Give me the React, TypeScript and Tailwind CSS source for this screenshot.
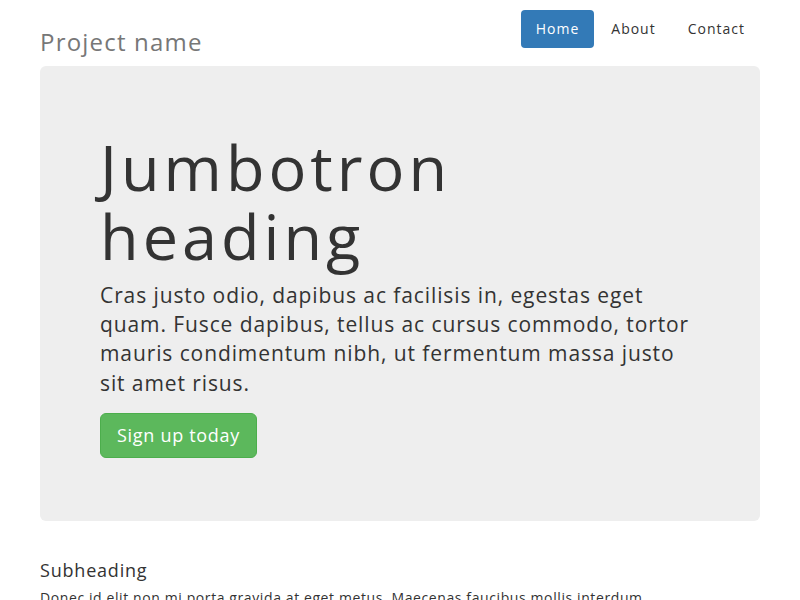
import React from "react";

export default function App() {
  return (
    <div
      className="min-h-[600px] bg-white text-[#333] text-[14px] leading-[1.42857] tracking-[0.6px]"
      style={{ fontFamily: '"Open Sans", "Noto Sans", sans-serif' }}
    >
      <div className="mx-[40px] w-[720px]">
        <header className="flex h-[66px] items-start justify-between">
          <h3 className="mt-[22px] text-[24px] leading-[40px] tracking-[1.2px] text-[#777]">Project name</h3>
          <nav className="mt-[10px] flex gap-[2px] tracking-[1px]">
            <a className="flex h-[38px] items-center rounded-[4px] bg-[#337ab7] px-[15px] text-white">Home</a>
            <a className="flex h-[38px] items-center rounded-[4px] px-[15px] text-[#333]">About</a>
            <a className="flex h-[38px] items-center rounded-[4px] px-[15px] text-[#333]">Contact</a>
          </nav>
        </header>
        <section className="rounded-[6px] bg-[#eee] px-[60px] pt-[48px] pb-[48px]">
          <h1 className="mt-[18px] mb-[10px] w-[480px] text-[63px] leading-[1.1] tracking-[4px]">Jumbotron heading</h1>
          <p className="mb-[15px] w-[600px] text-[21px] leading-[1.4] tracking-[0.9px]">
            Cras justo odio, dapibus ac facilisis in, egestas eget quam. Fusce dapibus, tellus ac cursus commodo, tortor mauris condimentum nibh, ut fermentum massa justo sit amet risus.
          </p>
          <p className="mb-[15px]">
            <a className="inline-flex h-[45px] items-center rounded-[6px] border border-[#4cae4c] bg-[#5cb85c] px-[16px] text-[18px] tracking-[0.7px] text-white">
              Sign up today
            </a>
          </p>
        </section>
        <div className="mt-[40px]">
          <h4 className="text-[18px] leading-[1.1] tracking-[0.8px]">Subheading</h4>
          <p className="mt-[7px]">Donec id elit non mi porta gravida at eget metus. Maecenas faucibus mollis interdum.</p>
        </div>
      </div>
    </div>
  );
}
